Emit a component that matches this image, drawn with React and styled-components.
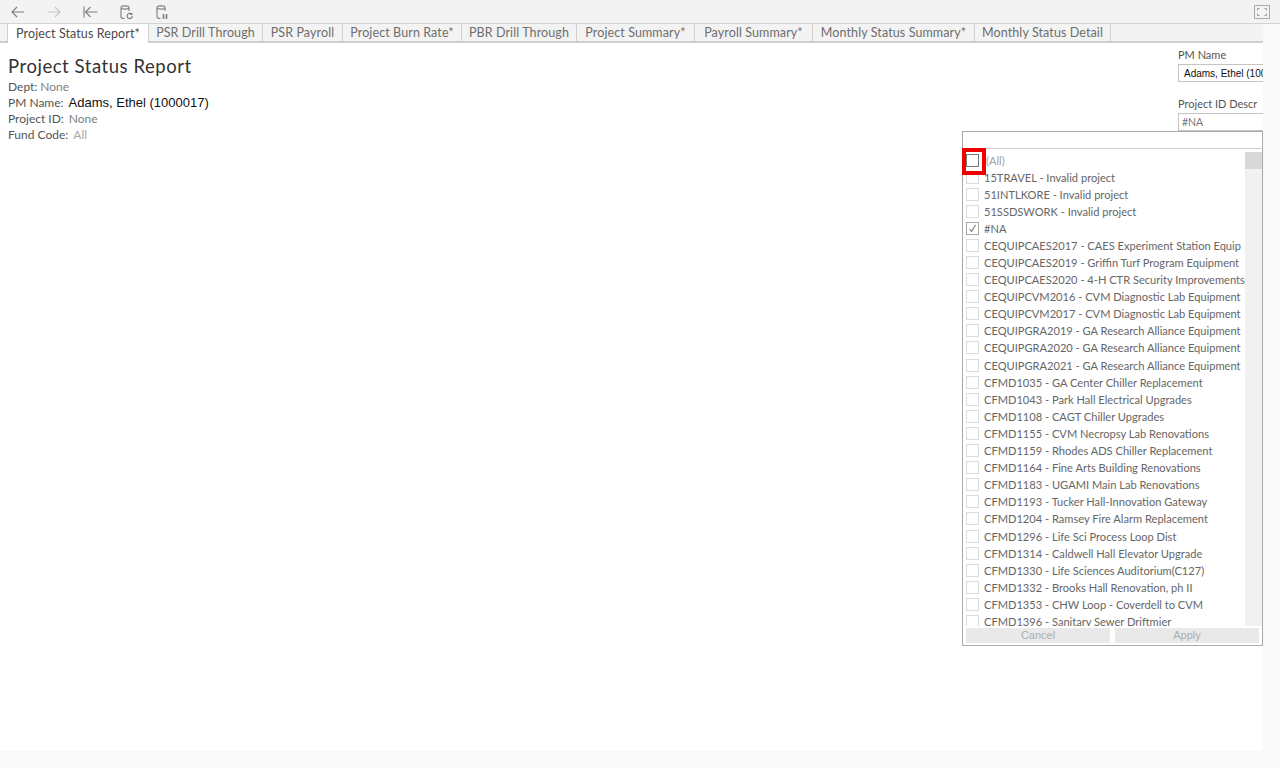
import React from 'react';
import styled, { createGlobalStyle } from 'styled-components';

const Global = createGlobalStyle`
  html, body { margin: 0; padding: 0; background: #fff; }
  body { font-family: Lato, "Open Sans", "Liberation Sans", sans-serif; overflow: hidden; }
`;

const Page = styled.div`
  position: relative;
  width: 1280px;
  height: 768px;
  display: flex;
  flex-direction: column;
  background: #f9f9f9;
  overflow: hidden;
`;

const Toolbar = styled.div`
  height: 23px;
  flex: none;
  display: flex;
  align-items: center;
  justify-content: space-between;
  padding: 0 10px 0 9px;
  background: #f3f3f3;
  border-bottom: 1px solid #d4d4d4;
`;

const ToolGroup = styled.div`
  display: flex;
  align-items: center;
  gap: 18px;
`;

const ToolIcon = styled.svg`
  width: 18px;
  height: 18px;
  fill: none;
  stroke: ${(p) => (p.$off ? '#c4c4c4' : '#7d7d7d')};
  stroke-width: 1.1;
  display: block;
`;

const FitButton = styled.div`
  width: 14px;
  height: 12px;
  border: 1px solid #aaa;
  display: flex;
  align-items: center;
  justify-content: center;
`;

const TabRow = styled.div`
  width: 1263px;
  height: 19px;
  flex: none;
  box-sizing: border-box;
  display: flex;
  padding-left: 7px;
  background: #f3f3f3;
  border-bottom: 2px solid #cfcfcf;
`;

const Tab = styled.div`
  width: ${(p) => p.$w}px;
  height: ${(p) => (p.$active ? '19px' : '17px')};
  box-sizing: border-box;
  flex: none;
  display: flex;
  align-items: center;
  justify-content: center;
  font-size: 12.5px;
  letter-spacing: 0.1px;
  white-space: nowrap;
  color: ${(p) => (p.$active ? '#4a4a4a' : '#6e6e6e')};
  background: ${(p) => (p.$active ? '#fff' : 'transparent')};
  border-left: ${(p) => (p.$active ? '1px solid #cfcfcf' : 'none')};
  border-right: 1px solid #cfcfcf;
  position: relative;
  z-index: 1;
`;

const Sheet = styled.div`
  width: 1263px;
  height: 708px;
  flex: none;
  display: flex;
  justify-content: space-between;
  background: #fff;
`;

const Heading = styled.div`
  padding: 13px 0 0 8px;
`;

const Title = styled.div`
  font-size: 18.5px;
  line-height: 20px;
  letter-spacing: 0.55px;
  color: #333;
  margin-bottom: 2px;
`;

const InfoLine = styled.div`
  height: 16px;
  display: flex;
  align-items: center;
  gap: ${(p) => (p.$tight ? '3px' : '5px')};
  font-size: 12px;
  white-space: nowrap;
  color: #555;
`;

const Muted = styled.span`
  color: ${(p) => (p.$light ? '#a8a8a8' : '#808080')};
`;

const Strong = styled.span`
  font-family: "Liberation Sans", sans-serif;
  font-size: 13px;
  color: #111;
`;

const FilterColumn = styled.div`
  width: 85px;
  padding-top: 5px;
  overflow: hidden;
`;

const FilterLabel = styled.div`
  font-size: 11px;
  line-height: 14px;
  color: #555;
  white-space: nowrap;
  margin-bottom: 2px;
`;

const FilterValue = styled.div`
  height: 18px;
  box-sizing: border-box;
  border: 1px solid #c4c4c4;
  border-right: none;
  padding-left: ${(p) => (p.$dim ? '3px' : '5px')};
  display: flex;
  align-items: center;
  white-space: nowrap;
  overflow: hidden;
  margin-bottom: 15px;
  font-size: ${(p) => (p.$dim ? '10.5px' : '10px')};
  font-family: ${(p) => (p.$dim ? 'inherit' : '"Liberation Sans", sans-serif')};
  color: ${(p) => (p.$dim ? '#777' : '#111')};
`;

const Popover = styled.div`
  position: absolute;
  left: 962px;
  top: 131px;
  width: 301px;
  height: 515px;
  box-sizing: border-box;
  background: #fff;
  border: 1px solid #a9a9a9;
  display: flex;
  flex-direction: column;
`;

const SearchBox = styled.div`
  height: 16px;
  flex: none;
  border-bottom: 1px solid #d0d0d0;
`;

const ListArea = styled.div`
  height: 477px;
  flex: none;
  display: flex;
  overflow: hidden;
`;

const List = styled.div`
  width: 282px;
  box-sizing: border-box;
  padding: 3px 0 0 3px;
  flex: none;
  overflow: hidden;
`;

const Row = styled.div`
  height: ${(p) => (p.$dim ? '16.5px' : '17.1px')};
  display: flex;
  align-items: center;
  gap: ${(p) => (p.$dim ? '7px' : '5px')};
  font-size: 11.1px;
  white-space: nowrap;
  color: ${(p) => (p.$dim ? '#a0a0a0' : '#666')};
`;

const Box = styled.div`
  width: 13px;
  height: 13px;
  flex: none;
  box-sizing: border-box;
  background: #fff;
  border: 1px solid ${(p) => (p.$strong ? '#7a7a7a' : p.$checked ? '#a8a8a8' : '#dcdcdc')};
  display: flex;
  align-items: center;
  justify-content: center;
`;

const Highlight = styled.div`
  position: absolute;
  left: -1px;
  top: 16px;
  width: 24px;
  height: 27px;
  box-sizing: border-box;
  border: 4px solid #f00000;
`;

const ScrollTrack = styled.div`
  width: 17px;
  margin-top: 3px;
  flex: none;
  background: #f1f1f1;
`;

const ScrollThumb = styled.div`
  height: 17px;
  background: #d8d8d8;
`;

const ActionRow = styled.div`
  display: flex;
  gap: 5px;
  padding: 2px 3px 0 3px;
`;

const Action = styled.div`
  flex: 1;
  height: 15px;
  box-sizing: border-box;
  padding-bottom: 1px;
  background: #e9e9e9;
  color: #adadad;
  font-family: "Liberation Sans", sans-serif;
  font-size: 11px;
  display: flex;
  align-items: center;
  justify-content: center;
`;

const tabs = [
  { name: 'Project Status Report*', w: 142 },
  { name: 'PSR Drill Through', w: 114 },
  { name: 'PSR Payroll', w: 80 },
  { name: 'Project Burn Rate*', w: 119 },
  { name: 'PBR Drill Through', w: 115 },
  { name: 'Project Summary*', w: 118 },
  { name: 'Payroll Summary*', w: 118 },
  { name: 'Monthly Status Summary*', w: 162 },
  { name: 'Monthly Status Detail', w: 136 },
];

const items = [
  '15TRAVEL - Invalid project',
  '51INTLKORE - Invalid project',
  '51SSDSWORK - Invalid project',
  '#NA',
  'CEQUIPCAES2017 - CAES Experiment Station Equip',
  'CEQUIPCAES2019 - Griffin Turf Program Equipment',
  'CEQUIPCAES2020 - 4-H CTR Security Improvements',
  'CEQUIPCVM2016 - CVM Diagnostic Lab Equipment',
  'CEQUIPCVM2017 - CVM Diagnostic Lab Equipment',
  'CEQUIPGRA2019 - GA Research Alliance Equipment',
  'CEQUIPGRA2020 - GA Research Alliance Equipment',
  'CEQUIPGRA2021 - GA Research Alliance Equipment',
  'CFMD1035 - GA Center Chiller Replacement',
  'CFMD1043 - Park Hall Electrical Upgrades',
  'CFMD1108 - CAGT Chiller Upgrades',
  'CFMD1155 - CVM Necropsy Lab Renovations',
  'CFMD1159 - Rhodes ADS Chiller Replacement',
  'CFMD1164 - Fine Arts Building Renovations',
  'CFMD1183 - UGAMI Main Lab Renovations',
  'CFMD1193 - Tucker Hall-Innovation Gateway',
  'CFMD1204 - Ramsey Fire Alarm Replacement',
  'CFMD1296 - Life Sci Process Loop Dist',
  'CFMD1314 - Caldwell Hall Elevator Upgrade',
  'CFMD1330 - Life Sciences Auditorium(C127)',
  'CFMD1332 - Brooks Hall Renovation, ph II',
  'CFMD1353 - CHW Loop - Coverdell to CVM',
  'CFMD1396 - Sanitary Sewer Driftmier',
];

function Tools() {
  return (
    <ToolGroup>
      <ToolIcon viewBox="0 0 18 18">
        <path d="M15 9H3M8 4L3 9l5 5" />
      </ToolIcon>
      <ToolIcon viewBox="0 0 18 18" $off>
        <path d="M3 9h12M10 4l5 5-5 5" />
      </ToolIcon>
      <ToolIcon viewBox="0 0 18 18">
        <path d="M3 3.5v11M16.5 9H4.5M9.5 4l-5 5 5 5" />
      </ToolIcon>
      <ToolIcon viewBox="0 0 18 18">
        <path d="M12 4.5V8M4 4.5V14c0 1 1.5 1.5 3.5 1.5M4 4.5c0-1 1.8-1.6 4-1.6s4 .6 4 1.6-1.8 1.6-4 1.6-4-.6-4-1.6z" />
        <path d="M15.3 13a2.6 2.6 0 1 1-.8-1.9M14.9 9.9v1.6h-1.6" />
      </ToolIcon>
      <ToolIcon viewBox="0 0 18 18">
        <path d="M12 4.5V8M4 4.5V14c0 1 1.5 1.5 3.5 1.5M4 4.5c0-1 1.8-1.6 4-1.6s4 .6 4 1.6-1.8 1.6-4 1.6-4-.6-4-1.6z" />
        <path d="M10.5 11v5M13.5 11v5" strokeWidth="1.6" />
      </ToolIcon>
    </ToolGroup>
  );
}

function FitIcon() {
  return (
    <svg width="10" height="8" viewBox="0 0 10 8" fill="none" stroke="#999" strokeWidth="1">
      <path d="M.5 2.5v-2h2M7.5.5h2v2M9.5 5.5v2h-2M2.5 7.5h-2v-2" />
    </svg>
  );
}

function Check() {
  return (
    <svg width="11" height="11" viewBox="0 0 11 11" fill="none" stroke="#777" strokeWidth="1.1">
      <path d="M2.5 6l2 2.5L8.5 2" />
    </svg>
  );
}

export default function App() {
  return (
    <Page>
      <Global />
      <Toolbar>
        <Tools />
        <FitButton>
          <FitIcon />
        </FitButton>
      </Toolbar>
      <TabRow>
        {tabs.map((t, i) => (
          <Tab key={t.name} $w={t.w} $active={i === 0}>
            {t.name}
          </Tab>
        ))}
      </TabRow>
      <Sheet>
        <Heading>
          <Title>Project Status Report</Title>
          <InfoLine $tight>
            Dept: <Muted>None</Muted>
          </InfoLine>
          <InfoLine>
            PM Name: <Strong>Adams, Ethel (1000017)</Strong>
          </InfoLine>
          <InfoLine>
            Project ID: <Muted>None</Muted>
          </InfoLine>
          <InfoLine>
            Fund Code: <Muted $light>All</Muted>
          </InfoLine>
        </Heading>
        <FilterColumn>
          <FilterLabel>PM Name</FilterLabel>
          <FilterValue>Adams, Ethel (1000017)</FilterValue>
          <FilterLabel>Project ID Descr</FilterLabel>
          <FilterValue $dim>#NA</FilterValue>
        </FilterColumn>
      </Sheet>
      <Popover>
        <SearchBox />
        <ListArea>
          <List>
            <Row $dim>
              <Box $strong />
              (All)
            </Row>
            {items.map((item) => (
              <Row key={item}>
                <Box $checked={item === '#NA'}>{item === '#NA' && <Check />}</Box>
                {item}
              </Row>
            ))}
          </List>
          <ScrollTrack>
            <ScrollThumb />
          </ScrollTrack>
        </ListArea>
        <ActionRow>
          <Action>Cancel</Action>
          <Action>Apply</Action>
        </ActionRow>
        <Highlight />
      </Popover>
    </Page>
  );
}
